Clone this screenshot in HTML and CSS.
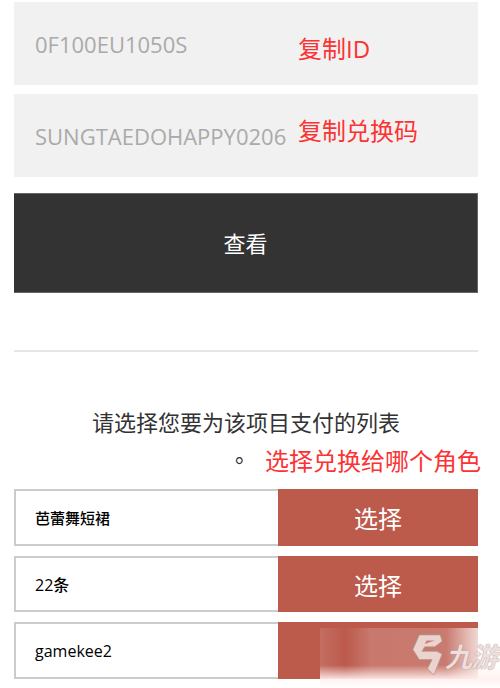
FILE: index.html
```html
<!DOCTYPE html>
<html lang="zh-CN">
<head>
    <meta charset="UTF-8">
    <title>兑换</title>
    <link rel="stylesheet" href="styles.css">
</head>
<body>
    <div class="container">
        <div class="input-box">
            <span class="input-text">0F100EU1050S</span>
            <span class="note note-id">复制ID</span>
        </div>
        <div class="input-box">
            <span class="input-text">SUNGTAEDOHAPPY0206</span>
            <span class="note note-code">复制兑换码</span>
        </div>
        <div class="view-btn">查看</div>

        <div class="divider"></div>

        <div class="prompt">
            请选择您要为该项目支付的列表<br>。
            <span class="note note-role">选择兑换给哪个角色</span>
        </div>

        <div class="role-list">
            <div class="role-item">
                <div class="role-name">芭蕾舞短裙</div>
                <div class="role-btn">选择</div>
            </div>
            <div class="role-item">
                <div class="role-name role-name-large">22条</div>
                <div class="role-btn">选择</div>
            </div>
            <div class="role-item">
                <div class="role-name role-name-large">gamekee2</div>
                <div class="role-btn"></div>
            </div>
        </div>
    </div>

    <!-- 水印 -->
    <div class="watermark">
        <svg class="watermark-logo" viewBox="0 0 34 46">
            <path d="M8 1H31L33 8L25 14H14L11 19H27L33 22L24 45L17 38L22 28H8L1 17Z" fill="#ecd3ce" stroke="#a89a97" stroke-width="0.8"/>
            <path d="M16 7H25L14 11Z" fill="#c98478"/>
        </svg>
        <span class="watermark-text">九游</span>
    </div>
</body>
</html>
```
FILE: styles.css
```css
body {
    margin: 0;
    background-color: white;
    font-family: "Open Sans", "Noto Sans CJK SC", sans-serif;
    overflow: hidden;
}

.container {
    padding: 2px 22px 0 14px;
}

.input-box {
    position: relative;
    display: flex;
    align-items: center;
    height: 83px;
    margin-bottom: 9px;
    padding-left: 21px;
    background-color: #f1f1f1;
}

.input-text {
    font-size: 22px;
    color: #aaa;
}

.note {
    position: absolute;
    font-size: 24px;
    line-height: 30px;
    color: #fb3333;
    white-space: nowrap;
}

.note-id {
    left: 284px;
    top: 32px;
}

.note-code {
    left: 284px;
    top: 22px;
}

.view-btn {
    display: flex;
    align-items: center;
    justify-content: center;
    box-sizing: border-box;
    height: 100px;
    margin-top: 16px;
    padding-bottom: 2px;
    border: 1px solid #666;
    border-width: 1px 1px 1px 0;
    background-color: #333;
    color: white;
    font-size: 22px;
}

.divider {
    height: 2px;
    margin-top: 57px;
    background-color: #e6e6e6;
}

.prompt {
    position: relative;
    margin-top: 55px;
    font-size: 22px;
    line-height: 31px;
    text-align: center;
    color: #333;
}

.note-role {
    right: -3px;
    top: 39px;
}

.role-list {
    display: flex;
    flex-direction: column;
    gap: 10px;
    margin-top: 20px;
}

.role-item {
    display: flex;
    height: 56.7px;
}

.role-name {
    display: flex;
    align-items: center;
    box-sizing: border-box;
    width: 264px;
    padding-left: 19px;
    border: 2px solid #ccc;
    border-right: none;
    font-size: 15px;
    font-weight: 500;
    color: black;
}

.role-name-large {
    font-size: 16px;
}

.role-btn {
    display: flex;
    align-items: center;
    justify-content: center;
    flex-grow: 1;
    background-color: #bc5a4c;
    color: white;
    font-size: 24px;
}

.watermark {
    position: absolute;
    left: 320px;
    top: 628px;
    width: 180px;
    height: 60px;
    display: flex;
    align-items: center;
    padding: 0 0 6px 91px;
    box-sizing: border-box;
    gap: 1px;
    background:
        linear-gradient(to bottom, rgba(255,255,255,0) 62%, rgba(255,240,238,0.9) 85%, rgba(255,255,255,0.95) 100%),
        linear-gradient(to right, rgba(255,255,255,0.12) 0, rgba(255,255,255,0) 14%, rgba(255,255,255,0.18) 28%, rgba(255,255,255,0.2) 70%, rgba(255,255,255,0.9) 92%, white 100%);
}

.watermark-logo {
    width: 33px;
    height: 42px;
    flex-shrink: 0;
}

.watermark-text {
    font-size: 27px;
    font-style: italic;
    font-weight: bold;
    color: #efdedb;
    text-shadow: 0 0 1px #8a7a78;
    white-space: nowrap;
    letter-spacing: -1px;
}
```
